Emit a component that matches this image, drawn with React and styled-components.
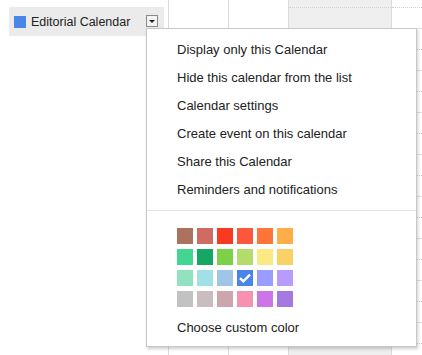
import React from 'react';
import styled, { createGlobalStyle } from 'styled-components';

const GlobalStyle = createGlobalStyle`
  html, body {
    margin: 0;
    padding: 0;
    background: #fff;
    overflow: hidden;
  }
  body {
    font-family: "Liberation Sans", Arial, sans-serif;
    font-size: 13px;
    color: #222;
  }
`;

const Page = styled.div`
  position: relative;
  display: flex;
  width: 422px;
  height: 355px;
  overflow: hidden;
`;

const Sidebar = styled.div`
  width: 168px;
  flex: none;
  padding: 7px 0 0 9px;
  box-sizing: border-box;
`;

const Chip = styled.div`
  display: flex;
  align-items: center;
  width: 155px;
  height: 29px;
  background: #ebebeb;
  padding: 0 6px 0 5px;
  box-sizing: border-box;
`;

const ColorDot = styled.span`
  width: 12px;
  height: 12px;
  margin: 1px 5px 0 0;
  background: ${(p) => p.color};
  flex: none;
`;

const ChipLabel = styled.span`
  flex: 1;
  font-size: 12.5px;
  color: #222;
  white-space: nowrap;
`;

const DropButton = styled.span`
  display: flex;
  align-items: center;
  justify-content: center;
  width: 12px;
  height: 12px;
  margin-top: -1px;
  border: 1px solid #8a8a8a;
  background: #f2f2f2;
  box-sizing: border-box;
  &::after {
    content: '';
    border-left: 3px solid transparent;
    border-right: 3px solid transparent;
    border-top: 3px solid #222;
  }
`;

const Column = styled.div`
  flex: ${(p) => (p.width ? 'none' : '1')};
  width: ${(p) => (p.width ? `${p.width}px` : 'auto')};
  display: flex;
  flex-direction: column;
  padding-top: 7px;
  border-left: 1px solid #dcdcdc;
  box-sizing: border-box;
  background: ${(p) => (p.today ? '#efefef' : '#fff')};
`;

const HourRow = styled.div`
  position: relative;
  flex: none;
  height: 42px;
  border-top: 1px dotted #cfcfcf;
  box-sizing: border-box;
  &::after {
    content: '';
    position: absolute;
    left: 0;
    right: 0;
    top: 20px;
    height: 1px;
    background: ${(p) => (p.solid ? '#dedede' : 'transparent')};
  }
`;

const Menu = styled.div`
  position: absolute;
  left: 146px;
  top: 28px;
  width: 271px;
  height: 319px;
  box-sizing: border-box;
  background: #fff;
  border: 1px solid #c8c8c8;
  box-shadow: 1px 2px 3px rgba(0, 0, 0, 0.2);
  padding-top: 6px;
`;

const Item = styled.div`
  height: 28px;
  line-height: 28px;
  padding: 1px 0 0 30px;
  box-sizing: border-box;
  overflow: hidden;
  color: #222;
  white-space: nowrap;
`;

const Separator = styled.div`
  height: 1px;
  background: #e5e5e5;
  margin: 7px 0 17px;
`;

const Swatches = styled.div`
  display: grid;
  grid-template-columns: repeat(6, 16px);
  grid-auto-rows: 16px;
  column-gap: 4px;
  row-gap: 5px;
  padding-left: 30px;
  margin-bottom: 6px;
`;

const Swatch = styled.span`
  display: flex;
  align-items: center;
  justify-content: center;
  background: ${(p) => p.color};
`;

const palette = [
  '#ac725e', '#d06b64', '#f83a22', '#fa573c', '#ff7537', '#ffad46',
  '#42d692', '#16a765', '#7bd148', '#b3dc6c', '#fbe983', '#fad165',
  '#92e1c0', '#9fe1e7', '#9fc6e7', '#4986e7', '#9a9cff', '#b99aff',
  '#c2c2c2', '#cabdbf', '#cca6ac', '#f691b2', '#cd74e6', '#a47ae2',
];

const actions = [
  'Display only this Calendar',
  'Hide this calendar from the list',
  'Calendar settings',
  'Create event on this calendar',
  'Share this Calendar',
  'Reminders and notifications',
];

const hours = Array.from({ length: 9 }, (_, i) => i);

const Check = () => (
  <svg width="12" height="10" viewBox="0 0 12 10">
    <path d="M1 5.2 L4.3 8.3 L11 1.6" fill="none" stroke="#fff" strokeWidth="2.4" />
  </svg>
);

const App = () => (
  <Page>
    <GlobalStyle />
    <Sidebar>
      <Chip>
        <ColorDot color="#4986e7" />
        <ChipLabel>Editorial Calendar</ChipLabel>
        <DropButton />
      </Chip>
    </Sidebar>
    <Column width={60} />
    <Column width={60} />
    <Column width={103} today>
      <HourRow />
    </Column>
    <Column>
      {hours.map((h) => (
        <HourRow key={h} solid />
      ))}
    </Column>
    <Menu>
      {actions.map((a) => (
        <Item key={a}>{a}</Item>
      ))}
      <Separator />
      <Swatches>
        {palette.map((c) => (
          <Swatch key={c} color={c}>
            {c === '#4986e7' && <Check />}
          </Swatch>
        ))}
      </Swatches>
      <Item>Choose custom color</Item>
    </Menu>
  </Page>
);

export default App;
